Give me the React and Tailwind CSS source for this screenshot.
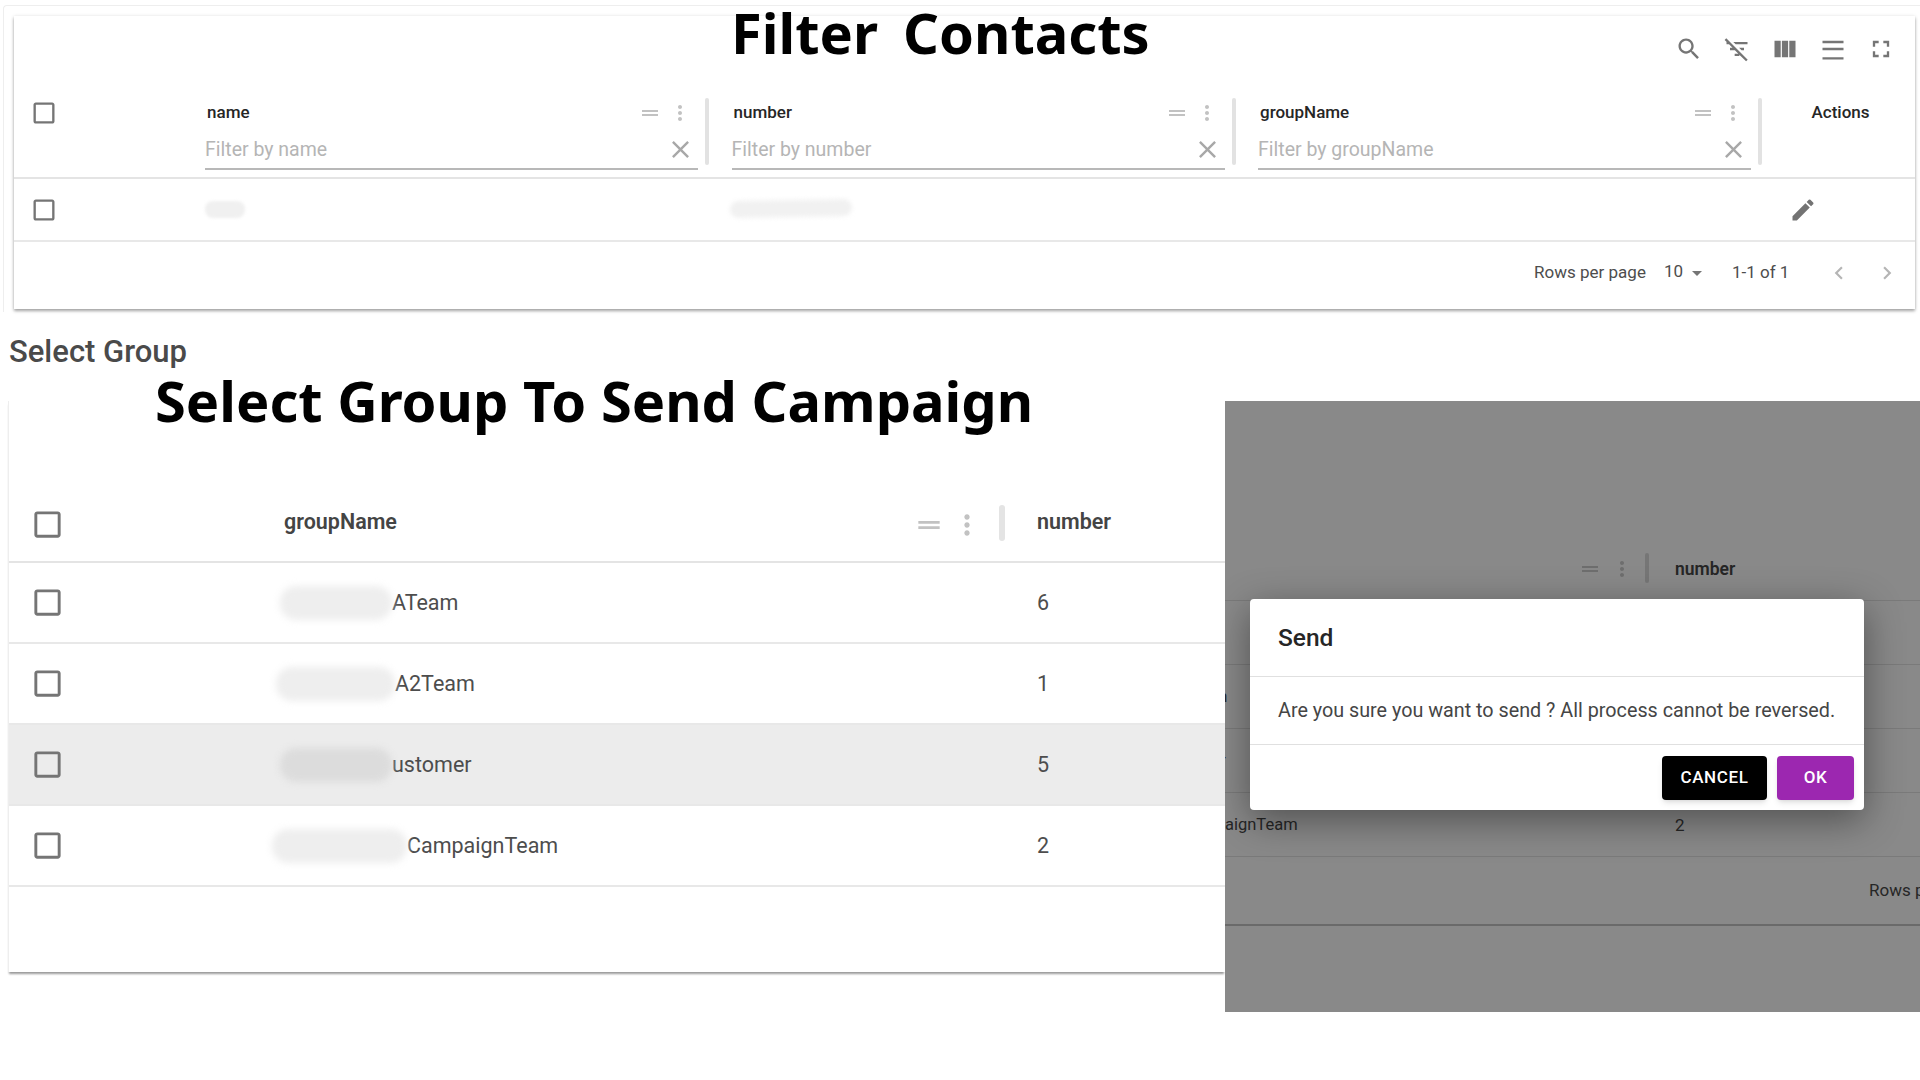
const P = {
  search: "M15.5 14h-.79l-.28-.27C15.41 12.59 16 11.11 16 9.5 16 5.91 13.09 3 9.5 3S3 5.91 3 9.5 5.91 16 9.5 16c1.61 0 3.09-.59 4.23-1.57l.27.28v.79l5 4.99L20.49 19l-4.99-5zm-6 0C7.01 14 5 11.99 5 9.5S7.01 5 9.5 5 14 7.01 14 9.5 11.99 14 9.5 14z",
  filterOff: "M10.83 8H21V6H8.83l2 2zm5 5H18v-2h-4.17l2 2zM14 16.83V18h-4v-2h3.17l-3-3H6v-2h2.17l-3-3H3V6h.17L1.39 4.22 2.8 2.81l18.38 18.38-1.41 1.41L14 16.83z",
  columns: "M14.67 5v14H9.33V5h5.34zm1 14H21V5h-5.33v14zm-7.34 0V5H3v14h5.33z",
  density: "M3 21h18v-2H3v2zM3 13h18v-2H3zM3 5v2h18V5z",
  full: "M7 14H5v5h5v-2H7v-3zm-2-4h2V7h3V5H5v5zm12 7h-3v2h5v-5h-2v3zM14 5v2h3v3h2V5h-5z",
  drag: "M20 9H4v2h16V9zM4 15h16v-2H4v2z",
  more: "M12 8c1.1 0 2-.9 2-2s-.9-2-2-2-2 .9-2 2 .9 2 2 2zm0 2c-1.1 0-2 .9-2 2s.9 2 2 2 2-.9 2-2-.9-2-2-2zm0 6c-1.1 0-2 .9-2 2s.9 2 2 2 2-.9 2-2-.9-2-2-2z",
  edit: "M3 17.25V21h3.75L17.81 9.94l-3.75-3.75L3 17.25zM20.71 7.04c.39-.39.39-1.02 0-1.41l-2.34-2.34a.9959.9959 0 0 0-1.41 0l-1.83 1.83 3.75 3.75 1.83-1.83z",
  close: "M19 6.41 17.59 5 12 10.59 6.41 5 5 6.41 10.59 12 5 17.59 6.41 19 12 13.41 17.59 19 19 17.59 13.41 12z",
  box: "M19 5v14H5V5h14m0-2H5c-1.1 0-2 .9-2 2v14c0 1.1.9 2 2 2h14c1.1 0 2-.9 2-2V5c0-1.1-.9-2-2-2z",
  left: "M15.41 7.41 14 6l-6 6 6 6 1.41-1.41L10.83 12z",
  right: "M10 6 8.59 7.41 13.17 12l-4.58 4.59L10 18l6-6z",
  down: "M7 10l5 5 5-5z",
};

const I = ({ d, size = 24, color = "#757575" }) => (
  <svg width={size} height={size} viewBox="0 0 24 24" fill={color} className="shrink-0 block">
    <path d={d} />
  </svg>
);

const headingFont = "font-['Noto_Sans',sans-serif] font-bold text-black whitespace-pre";

function FilterColumn({ label, placeholder }) {
  return (
    <div className="w-[526.5px] h-full relative pl-0 shrink-0">
      <div className="pl-[2px] pt-[4px] h-[38px] text-[17px] leading-[24px] font-medium text-[#262626]">{label}</div>
      <div className="w-[493px] h-[36px] border-b-2 border-[#b8b8b8] flex items-center justify-between text-[19.5px] text-[#b5b5b5] pb-[2px]">
        <span>{placeholder}</span>
        <span className="mr-[3px] mt-[-1px]"><I d={P.close} size={29} color="#a8a8a8" /></span>
      </div>
      <div className="absolute left-[433px] top-[5px] flex items-center gap-[7px]">
        <I d={P.drag} size={24} color="#c2c2c2" />
        <span className="ml-[-1px]"><I d={P.more} size={24} color="#c2c2c2" /></span>
      </div>
      <div className="absolute left-[500px] top-[2px] w-[4px] h-[67px] rounded-sm bg-[#e2e2e2]" />
    </div>
  );
}

function TopCard() {
  return (
    <div className="ml-[3px] mt-[5px] h-[307px] w-[1917px] pl-[10px] pt-[10px] border-l border-t border-[#eeeeee] rounded-tl">
      <div className="relative w-[1901px] h-[293px] bg-white flex flex-col shadow-[0_2px_3px_rgba(0,0,0,0.35),0_0_4px_rgba(0,0,0,0.08)]">
        <div className={`absolute left-[717px] top-[-14px] text-[56px] leading-[60px] [word-spacing:-2px] ${headingFont}`}>{"Filter  Contacts"}</div>
        <div className="h-[80px] shrink-0 flex items-start justify-end pt-[19px] pr-[20px] gap-[20px]">
          <I d={P.search} size={28} />
          <I d={P.filterOff} size={28} />
          <I d={P.columns} size={28} />
          <I d={P.density} size={28} />
          <I d={P.full} size={28} />
        </div>
        <div className="h-[83px] shrink-0 border-b-2 border-[#e4e4e4] flex">
          <div className="w-[191px] shrink-0 pl-[16px] pt-[3px]"><I d={P.box} size={28} /></div>
          <FilterColumn label="name" placeholder="Filter by name" />
          <FilterColumn label="number" placeholder="Filter by number" />
          <FilterColumn label="groupName" placeholder="Filter by groupName" />
          <div className="ml-[27px] pt-[4px] text-[17px] leading-[24px] font-medium text-[#262626]">Actions</div>
        </div>
        <div className="h-[63px] shrink-0 border-b-2 border-[#e8e8e8] flex items-center">
          <div className="w-[191px] shrink-0 pl-[16px]"><I d={P.box} size={28} /></div>
          <div className="w-[525px] shrink-0"><div className="w-[40px] h-[17px] rounded-lg bg-[#f0f0f0] blur-[1.5px]" /></div>
          <div className="w-[122px] h-[17px] rounded-xl bg-[#f1f1f1] blur-[2px] -rotate-1 mb-[3px]" />
          <div className="ml-auto mr-[98px]"><I d={P.edit} size={28} color="#737373" /></div>
        </div>
        <div className="flex-1 flex items-center justify-end pr-[15px] pb-[6px] text-[17px] text-[#4d4d4d]">
          <span>Rows per page</span>
          <span className="ml-[18px] mb-[1px]">10</span>
          <span className="ml-[2px]"><I d={P.down} size={24} color="#757575" /></span>
          <span className="ml-[23px] w-[59px] whitespace-nowrap">1-1 of 1</span>
          <span className="ml-[35px]"><I d={P.left} size={26} color="#b5b5b5" /></span>
          <span className="ml-[22px]"><I d={P.right} size={26} color="#b5b5b5" /></span>
        </div>
      </div>
    </div>
  );
}

const ROWS = [
  { n: "6", text: "ATeam", pill: "ml-[-4px] w-[112px]" },
  { n: "1", text: "A2Team", pill: "ml-[-8px] w-[119px]" },
  { n: "5", text: "ustomer", pill: "ml-[-4px] w-[112px]", hover: true },
  { n: "2", text: "CampaignTeam", pill: "ml-[-12px] w-[135px]" },
];

function GroupTable() {
  return (
    <div className="relative ml-[8px] w-[1217px] h-[571px] shrink-0 bg-white flex flex-col border-l border-[#eeeeee] shadow-[0_3px_2px_-1px_rgba(0,0,0,0.4)]">
      <div className={`absolute left-[146px] top-[-39px] text-[56px] leading-[76px] ${headingFont}`}>Select Group To Send Campaign</div>
      <div className="h-[162px] shrink-0 border-b-2 border-[#e4e4e4] flex items-center pt-[83px] relative">
        <div className="w-[275px] pl-[21px] shrink-0 pt-[4px]"><I d={P.box} size={35} /></div>
        <span className="text-[21.5px] font-semibold text-[#444]">groupName</span>
        <div className="absolute left-[904px] top-[108px] flex items-center gap-[6px]">
          <I d={P.drag} size={32} color="#c2c2c2" />
          <I d={P.more} size={32} color="#c2c2c2" />
        </div>
        <div className="absolute left-[990px] top-[104px] w-[6px] h-[36px] rounded-sm bg-[#e4e4e4]" />
        <span className="absolute left-[1028px] top-[106px] text-[21.5px] leading-[30px] font-semibold text-[#444]">number</span>
      </div>
      {ROWS.map((r) => (
        <div key={r.n} className={`h-[81px] shrink-0 border-b-2 border-[#e8e8e8] flex items-center text-[21.5px] text-[#4d4d4d] ${r.hover ? "bg-[#ececec]" : ""}`}>
          <div className="w-[275px] pl-[21px] shrink-0"><I d={P.box} size={35} /></div>
          <div className="w-[753px] shrink-0 flex items-center">
            <div className={`${r.pill} h-[34px] rounded-2xl blur-[3.5px] ${r.hover ? "bg-[#dcdcdc]" : "bg-[#eeeeee]"} shrink-0`} />
            <span className="pt-[2px]">{r.text}</span>
          </div>
          <span className="pt-[2px]">{r.n}</span>
        </div>
      ))}
    </div>
  );
}

function DarkPanel() {
  const rowCls = "h-[64px] shrink-0 border-b border-[#7a7a7a] flex items-center";
  return (
    <div className="relative w-[695px] h-[611px] shrink-0 overflow-hidden bg-[#898989] text-[17px] text-[#262626]">
      <div className="h-[200px] border-b border-[#7a7a7a] relative">
        <div className="absolute left-[353px] top-[156px] flex items-center gap-[8px]">
          <I d={P.drag} size={24} color="#6e6e6e" />
          <I d={P.more} size={24} color="#6e6e6e" />
        </div>
        <div className="absolute left-[420px] top-[152px] w-[4px] h-[30px] rounded-sm bg-[#767676]" />
        <span className="absolute left-[450px] top-[155px] font-semibold text-[17.5px]">number</span>
      </div>
      <div className={rowCls} />
      <div className={rowCls}><span className="ml-[-7px] w-[457px] shrink-0">n</span></div>
      <div className={rowCls}><span className="ml-[-5px] w-[455px] shrink-0">r</span></div>
      <div className={rowCls}><span className="w-[450px] shrink-0 text-[16.5px] pt-[2px]">aignTeam</span><span className="pt-[2px]">2</span></div>
      <div className="h-[69px] shrink-0 border-b-2 border-[#6a6a6a] flex items-center pl-[644px]">
        <span className="whitespace-nowrap">Rows per page</span>
      </div>
      <div className="absolute left-[25px] top-[198px] w-[614px] h-[211px] rounded bg-white flex flex-col shadow-[0_10px_38px_rgba(0,0,0,0.42)]">
        <div className="h-[78px] shrink-0 border-b border-[#e0e0e0] flex items-center pl-[28px] pt-[1px] text-[24.5px] font-medium text-[#262626]">Send</div>
        <div className="h-[68px] shrink-0 border-b border-[#e0e0e0] flex items-center pl-[28px] text-[19.75px] text-[#454545] whitespace-nowrap">
          Are you sure you want to send ? All process cannot be reversed.
        </div>
        <div className="flex-1 flex items-center justify-end gap-[10px] pr-[10px]">
          <button className="w-[105px] h-[44px] rounded bg-black text-white text-[17px] font-medium tracking-[0.6px] shadow-md">CANCEL</button>
          <button className="w-[77px] h-[44px] rounded bg-[#9c27b0] text-white text-[17px] font-medium tracking-[0.6px] shadow-md">OK</button>
        </div>
      </div>
    </div>
  );
}

export default function App() {
  return (
    <div className="w-[1920px] h-[1080px] overflow-hidden bg-white font-['Roboto',sans-serif]">
      <TopCard />
      <div className="pl-[9px] pt-[18px] h-[43px] text-[31px] leading-[43px] font-medium text-[#4a4a4a]">Select Group</div>
      <div className="mt-[46px] flex items-start">
        <GroupTable />
        <DarkPanel />
      </div>
    </div>
  );
}
